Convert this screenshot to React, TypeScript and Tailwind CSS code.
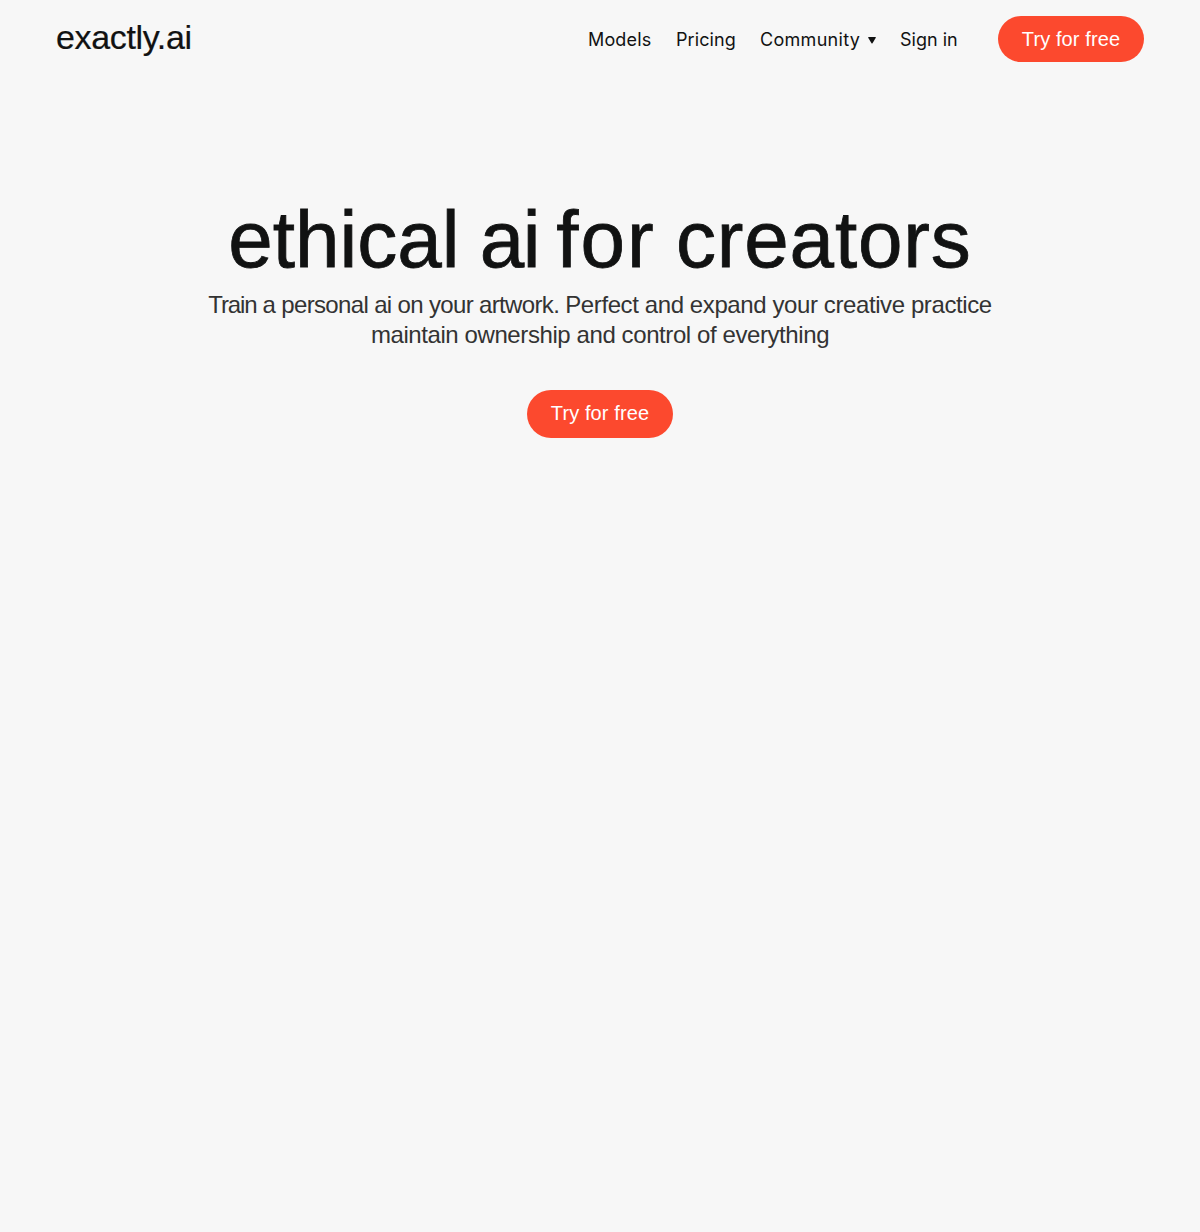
const cta = "flex w-[146px] items-center justify-center rounded-full bg-[#fc492e] font-['Liberation_Sans',Arial,sans-serif] text-[20px] leading-6 tracking-[0.1px] text-white";

export default function App() {
  return (
    <div className="min-h-screen bg-[#f7f7f7] font-['Liberation_Sans',Arial,sans-serif] text-[#111212]">
      <header className="flex h-[78px] items-center justify-between px-14">
        <a href="#" className="-mt-1 text-[34px] leading-8 tracking-[-0.35px] whitespace-nowrap [-webkit-text-stroke:0.2px_#111212]">exactly.ai</a>
        <nav className="flex items-center font-['Inter',sans-serif] text-[18px] leading-6 whitespace-nowrap">
          <a href="#" className="mt-0.5 mr-6 w-[64px] tracking-[0.15px]">Models</a>
          <a href="#" className="mt-0.5 mr-6 w-[60px] tracking-[0.1px]">Pricing</a>
          <button className="mt-0.5 mr-6 flex items-center">
            <span className="w-[100px] text-left tracking-[0.3px]">Community</span>
            <svg className="ml-2 h-[7px] w-[8px]" viewBox="0 0 8 7" fill="#111212"><path d="M.7 0h6.6q.9 0 .5.8L4.5 6.3q-.5.6-1 0L.2.8Q-.2 0 .7 0z" /></svg>
          </button>
          <a href="#" className="mt-0.5 mr-10 w-[58px]">Sign in</a>
          <a href="#" className={`${cta} h-[46px]`}>Try for free</a>
        </nav>
      </header>
      <main className="flex flex-col items-center pt-[122px] text-center">
        <h1 className="text-[80px] leading-[80px] [word-spacing:-2px] whitespace-nowrap [-webkit-text-stroke:0.8px_#111212]">
          ethical <span className="tracking-[-1.5px]">ai</span> <span className="-ml-[3px] tracking-[2px]">for</span>{" "}
          <span className="tracking-[0.85px]">creators</span>
        </h1>
        <p className="mt-[10px] text-[24px] leading-[30px] tracking-[-0.65px] whitespace-nowrap text-[#333]">
          <span className="tracking-[-1.1px]">Train</span> a personal ai on your artwork.{" "}
          <span className="tracking-[-0.4px]">Perfect and expand your creative practice</span>
          <br />
          <span className="tracking-[-0.41px]">maintain ownership and control of everything</span>
        </p>
        <a href="#" className={`${cta} mt-10 h-12 pb-0.5`}>Try for free</a>
      </main>
    </div>
  );
}
